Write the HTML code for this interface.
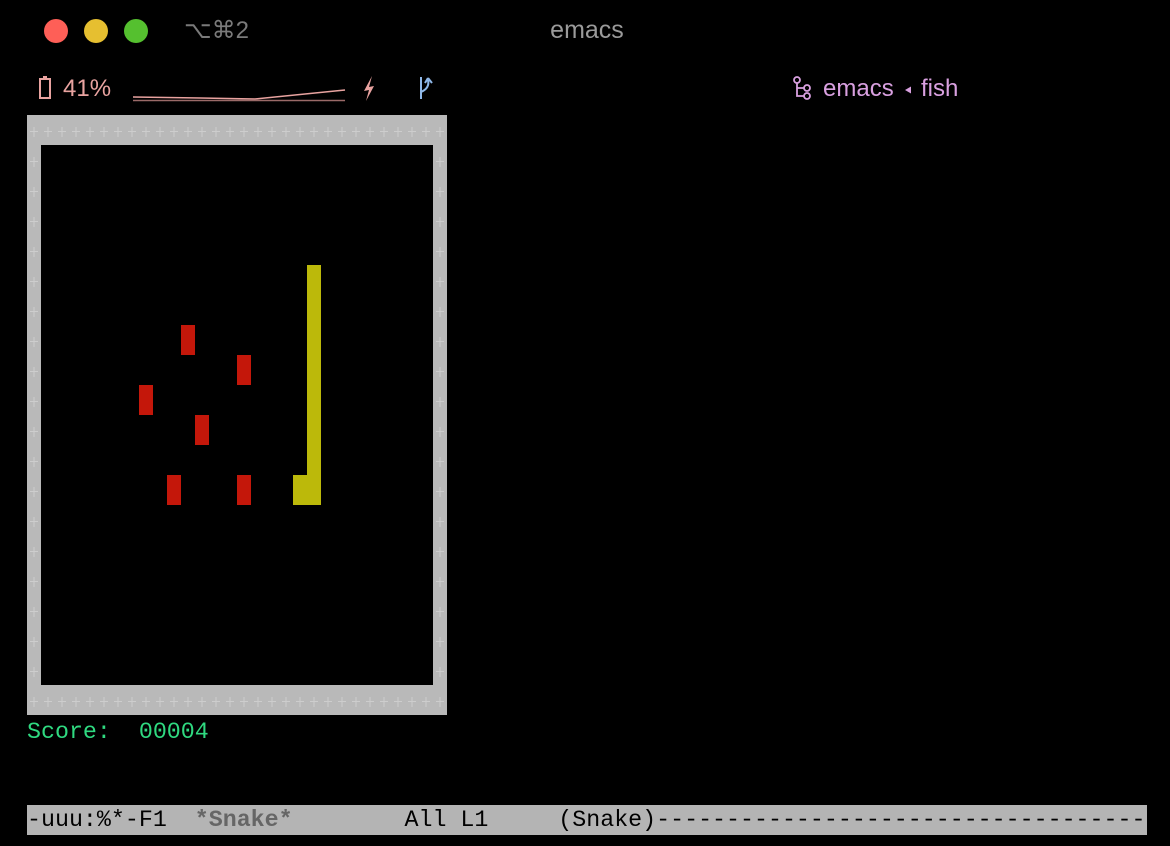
<!DOCTYPE html>
<html><head><meta charset="utf-8"><style>
body{margin:0;width:1170px;height:846px;background:#000;overflow:hidden;position:relative;font-family:"Liberation Sans",sans-serif}
.dot{position:absolute;top:19px;width:24px;height:24px;border-radius:50%}
.mono{font-family:"Liberation Mono",monospace;font-size:23.3px;white-space:pre;position:absolute;line-height:30px}
</style></head><body>
<div class="dot" style="left:44px;background:#fe5f57"></div>
<div class="dot" style="left:84px;background:#e6bf30"></div>
<div class="dot" style="left:124px;background:#55c02f"></div>
<div style="position:absolute;left:184px;top:16px;font-size:24px;color:#7a7a7a">⌥⌘2</div>
<div style="position:absolute;left:0;width:1174px;top:16px;text-align:center;font-size:25px;color:#9a9a9a">emacs</div>
<svg style="position:absolute;left:0;top:0" width="1170" height="846">
<defs><pattern id="p" x="27" y="115" width="14" height="30" patternUnits="userSpaceOnUse">
<path d="M3 16.5H11M7 12V22" stroke="#cdcdcd" stroke-width="1"/></pattern></defs>
<rect x="40" y="79" width="10" height="19" fill="none" stroke="#e9a3a0" stroke-width="2"/>
<rect x="43" y="76" width="4" height="3" fill="#e9a3a0"/>
<polyline points="133,97 200,98 255,99 345,90" fill="none" stroke="#e9a3a0" stroke-width="1.5"/>
<line x1="133" y1="100.5" x2="345" y2="100.5" stroke="#9a6a68" stroke-width="1.5"/>
<path d="M372,76 L364,91 L369,90 L366,101 L374,86 L369,87 Z" fill="#e9a3a0"/>
<path d="M421,77 V99 M421,92 Q430,88 428,80 M428,78 L425,83 M428,78 L432,83" fill="none" stroke="#8fb8e8" stroke-width="2"/>
<rect x="27" y="115" width="420" height="600" fill="#b9b9b9"/>
<rect x="27" y="115" width="420" height="600" fill="url(#p)"/>
<rect x="41" y="145" width="392" height="540" fill="#000"/>
<g fill="#c4170a">
<rect x="181" y="325" width="14" height="30"/><rect x="237" y="355" width="14" height="30"/>
<rect x="139" y="385" width="14" height="30"/><rect x="195" y="415" width="14" height="30"/>
<rect x="167" y="475" width="14" height="30"/><rect x="237" y="475" width="14" height="30"/>
</g>
<g fill="#bcb90a"><rect x="307" y="265" width="14" height="240"/><rect x="293" y="475" width="14" height="30"/></g>
<g fill="none" stroke="#d9a0e0" stroke-width="1.8"><circle cx="797" cy="80" r="3"/><circle cx="807" cy="88" r="3"/><circle cx="807" cy="96" r="3"/><path d="M797 83V96H804M797 88H804"/></g>
<path d="M905,90 L911,86.5 V93.5Z" fill="#d9a0e0"/>
</svg>
<div style="position:absolute;left:63px;top:75px;font-size:24px;color:#e9a3a0">41%</div>
<div style="position:absolute;left:823px;top:75px;font-size:24px;color:#d9a0e0">emacs</div>
<div style="position:absolute;left:921px;top:75px;font-size:24px;color:#d9a0e0">fish</div>
<div class="mono" style="left:27px;top:717px;color:#2fd980">Score:  00004</div>
<div style="position:absolute;left:27px;top:805px;width:1120px;height:30px;background:#b4b4b4;overflow:hidden">
<div class="mono" style="left:0;top:0;color:#000">-uuu:%*-F1  <b style="color:#666">*Snake*</b>        All L1     (Snake)-----------------------------------------</div></div>
</body></html>
